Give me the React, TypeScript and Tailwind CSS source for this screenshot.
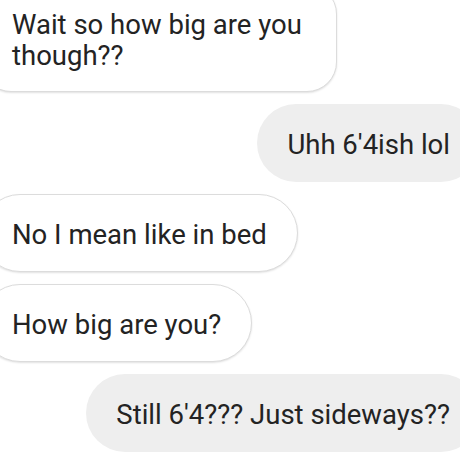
import React from 'react';

type Msg = { from: 'them' | 'me'; lines: string[] };

const messages: Msg[] = [
  { from: 'them', lines: ['Wait so how big are you', 'though??'] },
  { from: 'me', lines: ["Uhh 6'4ish lol"] },
  { from: 'them', lines: ['No I mean like in bed'] },
  { from: 'them', lines: ['How big are you?'] },
  { from: 'me', lines: ["Still 6'4??? Just sideways??"] },
];

const Bubble: React.FC<{ msg: Msg }> = ({ msg }) => {
  const multi = msg.lines.length > 1;
  const base = 'px-[30px] text-[27.5px] text-[#232323] whitespace-nowrap';
  if (msg.from === 'me') {
    return (
      <div className={`${base} self-end pt-[25px] pb-[21px] leading-[32px] bg-[#eeeeee] rounded-full`}>
        {msg.lines[0]}
      </div>
    );
  }
  return (
    <div
      className={`${base} self-start pt-[24px] pb-[20px] bg-white border border-[#dcdcdc] shadow-[0_1px_2px_rgba(0,0,0,0.12)] ${
        multi ? 'w-[356px] rounded-[30px] leading-[31px]' : 'rounded-full leading-[32px]'
      }`}
    >
      {msg.lines.map((l, i) => (
        <div key={i}>{l}</div>
      ))}
    </div>
  );
};

export default function App() {
  return (
    <div className="w-[460px] h-[455px] overflow-hidden bg-white font-['Roboto',_'Liberation_Sans',_sans-serif]">
      <div className="flex flex-col gap-3 -mt-[16px] -ml-[19px] -mr-[20px]">
        {messages.map((m, i) => (
          <Bubble key={i} msg={m} />
        ))}
      </div>
    </div>
  );
}
